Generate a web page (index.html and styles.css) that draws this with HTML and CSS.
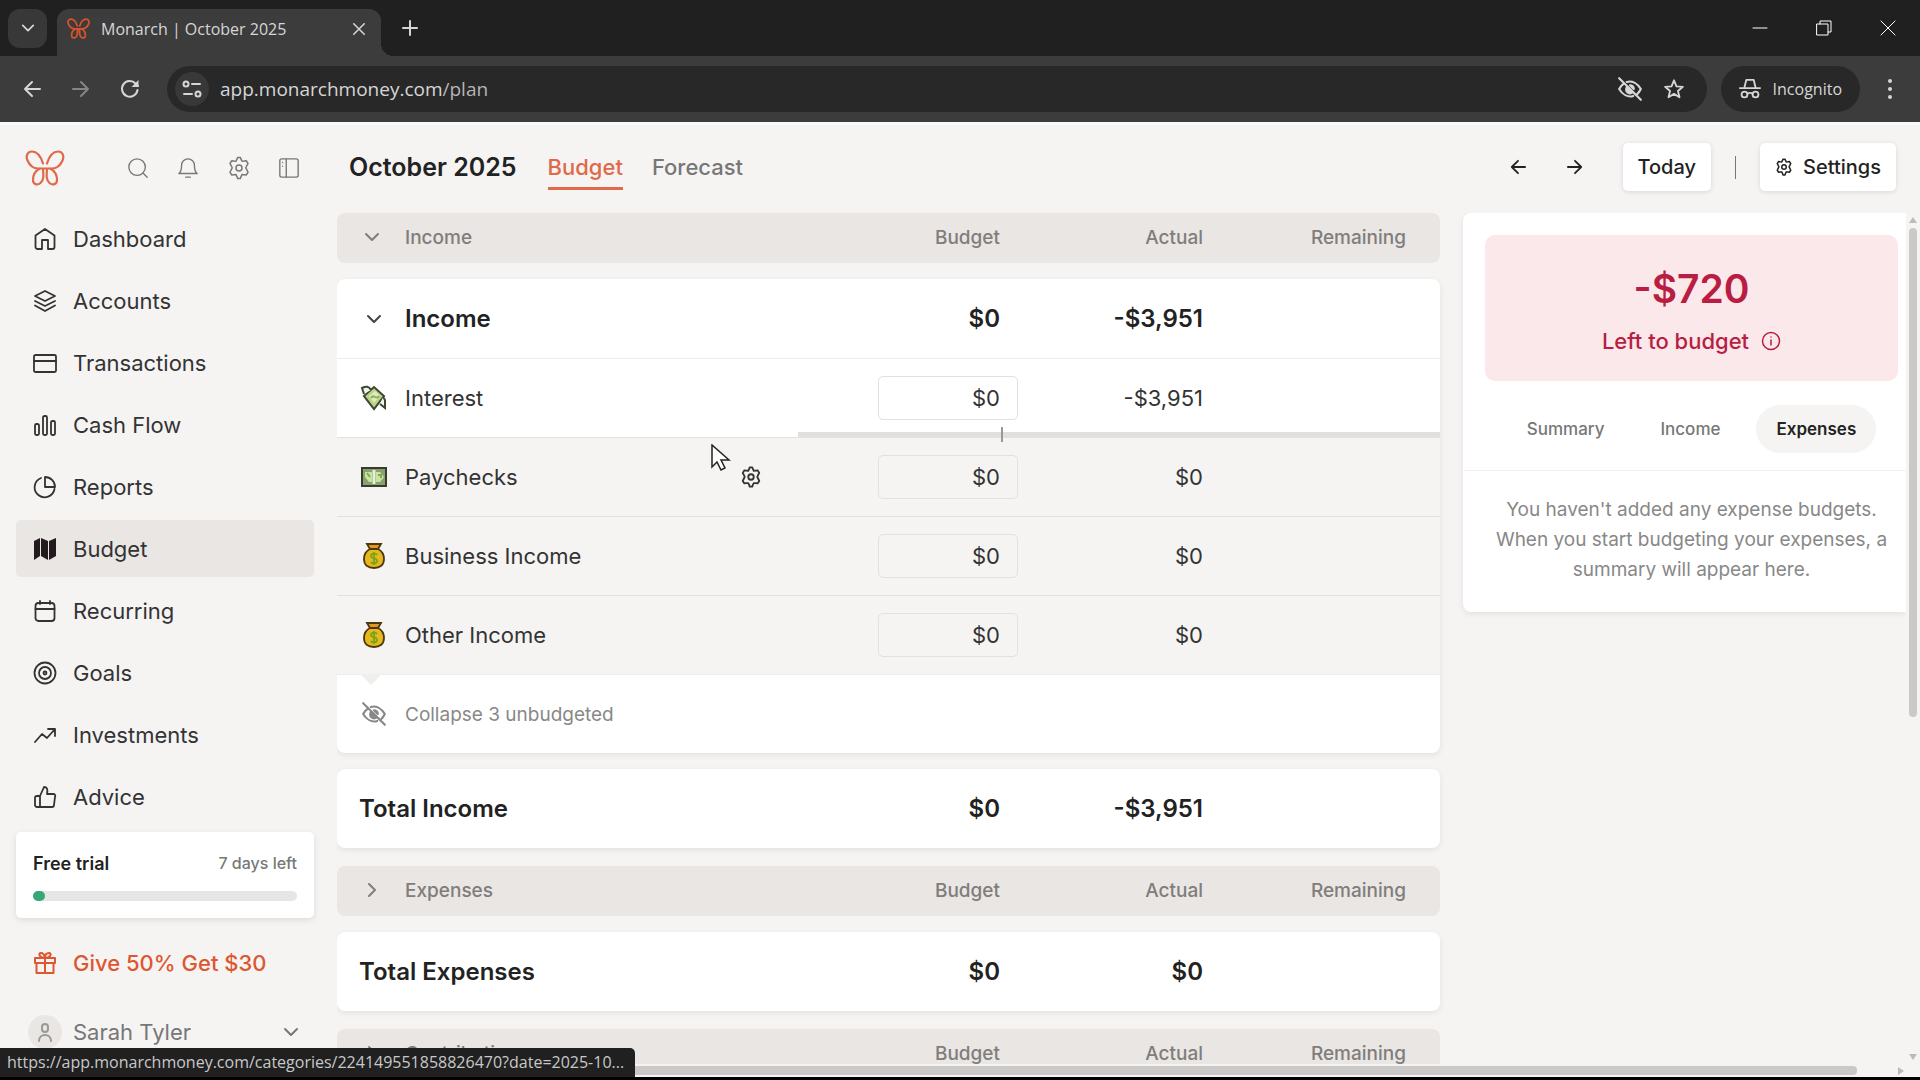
FILE: index.html
```html
<!DOCTYPE html>
<html lang="en">
<head>
    <meta charset="UTF-8" />
    <title>Monarch | October 2025</title>
    <link rel="stylesheet" href="styles.css">
</head>
<body>
    <!-- Icon sprite -->
    <svg class="sprite" xmlns="http://www.w3.org/2000/svg">
        <symbol id="logo" viewBox="0 0 40 36">
            <path d="M18 13.500C16 7 12 1.500 7 1.500C2.500 1.500 .500 6 2.500 10.500C4.500 15 8 18.500 13 18.500H27C32 18.500 35.500 15 37.500 10.500C39.500 6 37.500 1.500 33 1.500C28 1.500 24 7 22 13.500M15 18.500C10 21 8 26 8 30C8 34 12 36 15.500 33C19 30 18.500 25 18 19M25 18.500C30 21 32 26 32 30C32 34 28 36 24.500 33C21 30 21.500 25 22 19" />
        </symbol>
        <symbol id="chevron-down" viewBox="0 0 16 16"><path d="M2 5l6 6 6-6" /></symbol>
        <symbol id="chevron-right" viewBox="0 0 16 16"><path d="M5 2l6 6-6 6" /></symbol>
        <symbol id="arrow-left" viewBox="0 0 18 18"><path d="M17 9H2M9 2L2 9l7 7" /></symbol>
        <symbol id="arrow-right" viewBox="0 0 18 18"><path d="M1 9h15M9 2l7 7-7 7" /></symbol>
        <symbol id="close" viewBox="0 0 16 16"><path d="M1 1l14 14M15 1L1 15" /></symbol>
        <symbol id="plus" viewBox="0 0 16 16"><path d="M8 1v14M1 8h14" /></symbol>
        <symbol id="gear" viewBox="0 0 24 24">
            <path d="M10 3.200L10.600 1.500H13.400L14 3.200L15 5.200L17.300 5L19.200 4.700L21 7.500L20 9.300L18.800 11.800L20 14.200L21 16.300L19.200 19L17.200 18.700L15 18.600L14 20.600L13.400 22.500H10.600L10 20.600L9 18.600L6.800 18.700L4.800 19L3 16.300L4 14.200L5.200 11.800L4 9.300L3 7.500L4.800 4.700L6.700 5L9 5.200Z" />
            <circle cx="12" cy="12" r="3" />
        </symbol>
        <symbol id="eye-off" viewBox="0 0 24 24">
            <path d="M2 2l20 20M9 5.500C14 4 19 7 22 12C21 14 20 15.500 18.500 16.800M15 18.400C10 20 5 17 2 12C3 10 4.300 8.300 6 7.200" />
            <path d="M9.500 10a3.500 3.500 0 0 0 5 5zM12 8.500a3.500 3.500 0 0 1 3.500 3.500z" fill="currentColor" />
        </symbol>
        <symbol id="money-bag" viewBox="0 0 24 28">
            <path d="M8 7C4 9 2 13 2 17C2 23 6 26 12 26S22 23 22 17C22 13 20 9 16 7Z" fill="#e8b71d" stroke="#49390d" stroke-width="1.800" />
            <path d="M5 2H19L16 7H8Z" fill="#e5952a" stroke="#49390d" stroke-width="1.800" />
            <path d="M15 13C14 11 9 11 9 14C9 17 15 15 15 19C15 22 10 22 9 20M12 10V23" fill="none" stroke="#75a51c" stroke-width="1.800" />
        </symbol>
    </svg>

    <!-- Browser chrome -->
    <div class="tabstrip">
        <button class="tab-search" aria-label="Search tabs"><svg class="icon" width="14" height="14"><use href="#chevron-down" /></svg></button>
        <div class="tab">
            <svg class="icon favicon" width="23" height="21"><use href="#logo" /></svg>
            <span class="tab-title">Monarch | October 2025</span>
            <button class="plain" aria-label="Close tab"><svg class="icon" width="12" height="12"><use href="#close" /></svg></button>
        </div>
        <button class="plain new-tab" aria-label="New tab"><svg class="icon" width="16" height="16"><use href="#plus" /></svg></button>
        <div class="window-buttons">
            <button class="plain" aria-label="Minimize"><svg class="icon" width="16" height="16" viewBox="0 0 16 16"><path d="M1 8h14" /></svg></button>
            <button class="plain" aria-label="Restore"><svg class="icon" width="16" height="16" viewBox="0 0 16 16"><path d="M1 4h11v11H1zM4 4V1h11v11h-3" /></svg></button>
            <button class="plain" aria-label="Close window"><svg class="icon" width="16" height="16"><use href="#close" /></svg></button>
        </div>
    </div>
    <div class="toolbar">
        <button class="plain" aria-label="Back"><svg class="icon" width="18" height="18"><use href="#arrow-left" /></svg></button>
        <button class="plain dim" aria-label="Forward"><svg class="icon" width="18" height="18"><use href="#arrow-right" /></svg></button>
        <button class="plain" aria-label="Reload"><svg class="icon" width="20" height="20" viewBox="0 0 20 20"><path d="M17.500 11A7.800 7.800 0 1 1 15.500 4.500L18 7" /><path d="M18.500 1v7h-7z" fill="currentColor" stroke="none" /></svg></button>
        <div class="address">
            <span class="site-info"><svg class="icon" width="20" height="20" viewBox="0 0 20 20"><circle cx="4" cy="5" r="2.500" /><path d="M10 5h8M2 15h8" /><circle cx="16" cy="15" r="2.500" /></svg></span>
            <span class="url">app.monarchmoney.com<span class="url-path">/plan</span></span>
            <button class="plain" aria-label="Tracking protection"><svg class="icon" width="26" height="26"><use href="#eye-off" /></svg></button>
            <button class="plain" aria-label="Bookmark"><svg class="icon" width="22" height="22" viewBox="0 0 24 24"><path d="M12 2.500l2.700 6.600 7 .500-5.400 4.600 1.700 6.900-6-3.800-6 3.800 1.700-6.900L2.300 9.600l7-.500z" /></svg></button>
        </div>
        <div class="incognito">
            <svg class="icon" width="22" height="22" viewBox="0 0 24 24"><path d="M1 11h22M6 10l2-8h8l2 8" /><circle cx="6" cy="18" r="3.200" /><circle cx="18" cy="18" r="3.200" /><path d="M9 17c2-1 4-1 6 0" /></svg>
            Incognito
        </div>
        <button class="plain" aria-label="Menu"><svg width="20" height="22" viewBox="0 0 20 22" fill="currentColor"><circle cx="10" cy="3" r="2" /><circle cx="10" cy="11" r="2" /><circle cx="10" cy="19" r="2" /></svg></button>
    </div>

    <!-- Monarch app -->
    <div class="app">
        <aside class="sidebar">
            <div class="sidebar-top">
                <svg class="icon brand" width="40" height="36"><use href="#logo" /></svg>
                <button class="plain" aria-label="Search"><svg class="icon" width="22" height="22" viewBox="0 0 24 24"><circle cx="11" cy="11" r="9" /><path d="M18 18l4 4" /></svg></button>
                <button class="plain" aria-label="Notifications"><svg class="icon" width="22" height="22" viewBox="0 0 24 24"><path d="M2 18c3-2 3-6 3-9a7 7 0 0 1 14 0c0 3 0 7 3 9zM9.500 22h5" /></svg></button>
                <button class="plain" aria-label="Settings"><svg class="icon" width="24" height="24"><use href="#gear" /></svg></button>
                <button class="plain" aria-label="Toggle sidebar"><svg class="icon" width="22" height="22" viewBox="0 0 24 24"><rect x="2" y="2" width="20" height="20" rx="2" /><path d="M9 2v20M5 6v0M5 10v0" /></svg></button>
            </div>
            <nav class="nav">
                <a href="#"><svg class="icon" width="24" height="24" viewBox="0 0 24 24"><path d="M2.500 8.500L12 2l9.500 6.500V20a2 2 0 0 1-2 2H15v-9H9v9H4.500a2 2 0 0 1-2-2z" /></svg>Dashboard</a>
                <a href="#"><svg class="icon" width="24" height="24" viewBox="0 0 24 24"><path d="M12 2L22 7l-10 5L2 7zM2 12l10 5 10-5M2 16.500L12 22l10-5.500" /></svg>Accounts</a>
                <a href="#"><svg class="icon" width="24" height="24" viewBox="0 0 24 24"><rect x="1" y="4" width="22" height="17" rx="1.500" /><path d="M1 10h22" /></svg>Transactions</a>
                <a href="#"><svg class="icon" width="24" height="24" viewBox="0 0 24 24"><rect x="2" y="11" width="4" height="11" rx="1.500" /><rect x="10" y="3" width="4" height="19" rx="1.500" /><rect x="18" y="8" width="4" height="14" rx="1.500" /></svg>Cash Flow</a>
                <a href="#"><svg class="icon" width="24" height="24" viewBox="0 0 24 24"><path d="M8 3a10 10 0 1 0 13.500 11M12 2v10h10A10 10 0 0 0 12 2z" /></svg>Reports</a>
                <a href="#" class="active"><svg width="24" height="24" viewBox="0 0 24 24" fill="#231a1d"><path d="M1 4l6-3v18l-6 4zM8 1l7 3v19l-7-4zM16 4l7-3v18l-7 4z" /></svg>Budget</a>
                <a href="#"><svg class="icon" width="24" height="24" viewBox="0 0 24 24"><rect x="2.500" y="4" width="19" height="18" rx="3" /><path d="M2.500 10h19M7 2v3M17 2v3" /></svg>Recurring</a>
                <a href="#"><svg class="icon" width="24" height="24" viewBox="0 0 24 24"><circle cx="12" cy="12" r="10.500" /><circle cx="12" cy="12" r="6" /><circle cx="12" cy="12" r="1.500" /></svg>Goals</a>
                <a href="#"><svg class="icon" width="24" height="24" viewBox="0 0 24 24"><path d="M2 19l7-8 5 4 8-9M15 6h7v7" /></svg>Investments</a>
                <a href="#"><svg class="icon" width="24" height="24" viewBox="0 0 24 24"><path d="M7 11l4-9c3 0 4 2 3 7h6a2 2 0 0 1 2 3l-1 8a2 2 0 0 1-2 2H4a2 2 0 0 1-2-2v-7a2 2 0 0 1 2-2h3v11" /></svg>Advice</a>
            </nav>
            <div class="trial">
                <div class="trial-row"><strong>Free trial</strong><span>7 days left</span></div>
                <div class="trial-bar"><div class="trial-fill"></div></div>
            </div>
            <a href="#" class="side-link gift"><svg class="icon" width="24" height="24" viewBox="0 0 24 24"><path d="M2 7h20v5H2zM3.500 12v10h17V12M12 7v15M12 7C6 7 5 2 8 2s4 5 4 5c0-3 1-5 4-5s2 5-4 5" /></svg>Give 50% Get $30</a>
            <button class="side-link user">
                <span class="avatar"><svg class="icon" width="18" height="20" viewBox="0 0 18 20"><rect x="6" y="2" width="6" height="8" rx="3" /><path d="M3 19c0-8 12-8 12 0" /></svg></span>
                Sarah Tyler
                <svg class="icon user-caret" width="16" height="16"><use href="#chevron-down" /></svg>
            </button>
        </aside>

        <main class="main">
            <header class="page-head">
                <h1>October 2025</h1>
                <a href="#" class="page-tab selected">Budget</a>
                <a href="#" class="page-tab">Forecast</a>
                <div class="page-actions">
                    <button class="plain" aria-label="Previous month"><svg class="icon" width="16" height="16"><use href="#arrow-left" /></svg></button>
                    <button class="plain" aria-label="Next month"><svg class="icon" width="16" height="16"><use href="#arrow-right" /></svg></button>
                    <button class="btn today">Today</button>
                    <span class="divider"></span>
                    <button class="btn"><svg class="icon" width="18" height="18"><use href="#gear" /></svg>Settings</button>
                </div>
            </header>

            <div class="scroller">
                <div class="content">
                    <div class="plan">
                        <table>
                            <thead>
                                <tr><th class="name"><svg class="icon" width="16" height="16"><use href="#chevron-down" /></svg>Income</th><th>Budget</th><th>Actual</th><th>Remaining</th></tr>
                            </thead>
                            <tbody>
                                <tr class="group"><td class="name"><svg class="icon" width="16" height="16"><use href="#chevron-down" /></svg>Income</td><td>$0</td><td>-$3,951</td><td></td></tr>
                                <tr class="with-bar">
                                    <td class="name">
                                        <svg width="26" height="26" viewBox="0 0 26 26"><path d="M3 11L13 2l10 9-10 13z" fill="#b9d38a" stroke="#3c4630" stroke-width="2" /><path d="M8 11l6-5 5 5-6 7z" fill="#dcebb9" /><path d="M10 13c3-5 5 3 8-2" fill="none" stroke="#8fae5d" stroke-width="2" /><path d="M3 9L1 3c4-2 7-2 9 2M22 12l2 3v8l-5-4" fill="#f1f4e6" stroke="#3c4630" stroke-width="2" /></svg>
                                        Interest
                                    </td>
                                    <td class="entry"><input type="text" value="$0" aria-label="Interest budget"></td><td>-$3,951</td><td></td>
                                </tr>
                                <tr class="muted">
                                    <td class="name">
                                        <svg width="26" height="20" viewBox="0 0 26 20"><rect x="1" y="1" width="24" height="18" fill="#8b9f75" stroke="#353d2c" stroke-width="2" /><path d="M4 5h7v10H8L4 10zM15 5h4l4 5-4 5h-4z" fill="#c6e69a" /><path d="M13 3v14" stroke="#e8efdc" stroke-width="3" /><path d="M6 6l3 4M17 8h3v3" fill="none" stroke="#82a951" stroke-width="2" /></svg>
                                        Paychecks
                                        <button class="plain row-gear" aria-label="Paychecks settings"><svg class="icon" width="22" height="22"><use href="#gear" /></svg></button>
                                    </td>
                                    <td class="entry"><input type="text" value="$0" aria-label="Paychecks budget"></td><td>$0</td><td></td>
                                </tr>
                                <tr class="muted"><td class="name"><svg width="24" height="28"><use href="#money-bag" /></svg>Business Income</td><td class="entry"><input type="text" value="$0" aria-label="Business Income budget"></td><td>$0</td><td></td></tr>
                                <tr class="muted"><td class="name"><svg width="24" height="28"><use href="#money-bag" /></svg>Other Income</td><td class="entry"><input type="text" value="$0" aria-label="Other Income budget"></td><td>$0</td><td></td></tr>
                                <tr class="collapse"><td class="name" colspan="4"><svg class="icon" width="26" height="26"><use href="#eye-off" /></svg>Collapse 3 unbudgeted</td></tr>
                            </tbody>
                            <tbody>
                                <tr class="group"><td class="total">Total Income</td><td>$0</td><td>-$3,951</td><td></td></tr>
                            </tbody>
                        </table>
                        <table>
                            <thead>
                                <tr><th class="name"><svg class="icon" width="16" height="16"><use href="#chevron-right" /></svg>Expenses</th><th>Budget</th><th>Actual</th><th>Remaining</th></tr>
                            </thead>
                            <tbody>
                                <tr class="group"><td class="total">Total Expenses</td><td>$0</td><td>$0</td><td></td></tr>
                            </tbody>
                        </table>
                        <table>
                            <thead>
                                <tr><th class="name"><svg class="icon" width="16" height="16"><use href="#chevron-right" /></svg>Contributions</th><th>Budget</th><th>Actual</th><th>Remaining</th></tr>
                            </thead>
                        </table>
                    </div>

                    <section class="summary">
                        <div class="left-box">
                            <div class="left-amount">-$720</div>
                            <div class="left-label">Left to budget <svg class="icon" width="20" height="20" viewBox="0 0 20 20"><circle cx="10" cy="10" r="8.500" /><path d="M10 9v5M10 6v0" /></svg></div>
                        </div>
                        <div class="pills">
                            <button>Summary</button>
                            <button>Income</button>
                            <button class="on">Expenses</button>
                        </div>
                        <p>You haven't added any expense budgets. When you start budgeting your expenses, a summary will appear here.</p>
                    </section>
                </div>
                <div class="vbar">
                    <svg width="8" height="6" viewBox="0 0 8 6"><path d="M4 0l4 6H0z" /></svg>
                    <div class="vthumb"></div>
                    <svg width="8" height="6" viewBox="0 0 8 6"><path d="M0 0h8L4 6z" /></svg>
                </div>
            </div>
            <div class="hbar">
                <div class="hthumb"></div>
                <svg width="6" height="8" viewBox="0 0 6 8"><path d="M0 0l6 4-6 4z" /></svg>
            </div>
        </main>
    </div>

    <div class="status">https://app.monarchmoney.com/categories/224149551858826470?date=2025-10...</div>
    <svg class="cursor" width="20" height="28" viewBox="0 0 20 28"><path d="M1 1v22l5-5 4 8 4-2-4-8h8z" fill="#fff" stroke="#222" stroke-width="1.500" /></svg>
</body>
</html>
```

FILE: styles.css
```css
* {
    margin: 0;
    padding: 0;
    box-sizing: border-box;
}

body {
    height: 100vh;
    overflow: hidden;
    display: flex;
    flex-direction: column;
    position: relative;
    background: #f5f4f3;
    border-bottom: 3px solid #000;
    color: #333;
    font-family: Inter, "Liberation Sans", sans-serif;
    font-size: 22px;
}

a {
    color: inherit;
    text-decoration: none;
}

button {
    font: inherit;
    color: inherit;
    border: none;
    background: none;
}

svg {
    flex: none;
}

.sprite {
    display: none;
}

.icon {
    fill: none;
    stroke: currentColor;
    stroke-width: 2;
    stroke-linecap: round;
    stroke-linejoin: round;
}

.plain {
    display: flex;
    justify-content: center;
    align-items: center;
}

/* Browser chrome */
.tabstrip,
.toolbar,
.status {
    font-family: "Open Sans", "Noto Sans", sans-serif;
    color: #d6d6d6;
}

.tabstrip {
    display: flex;
    align-items: center;
    height: 56px;
    flex: none;
    padding-left: 8px;
    background: #202020;
}

.tab-search {
    display: flex;
    justify-content: center;
    align-items: center;
    width: 39px;
    height: 39px;
    border-radius: 12px;
    background: #383838;
}

.tab {
    position: relative;
    align-self: flex-end;
    display: flex;
    align-items: center;
    gap: 11px;
    width: 324px;
    height: 47px;
    margin-left: 10px;
    padding: 0 16px 8px 10px;
    border-radius: 12px 12px 0 0;
    background: #3c3c3c;
}

.tab::after {
    content: "";
    position: absolute;
    left: 100%;
    bottom: 0;
    width: 12px;
    height: 12px;
    background: radial-gradient(circle at 100% 0, transparent 12px, #3c3c3c 12px);
}

.favicon {
    color: #d9542b;
    stroke-width: 3;
}

.tab-title {
    flex: 1;
    font-size: 16px;
}

.new-tab {
    margin-left: 21px;
}

.window-buttons {
    display: flex;
    margin-left: auto;
}

.window-buttons .plain {
    width: 64px;
    height: 56px;
}

.window-buttons .icon {
    stroke-width: 1;
    color: #fff;
}

.toolbar {
    display: flex;
    align-items: center;
    gap: 14px;
    height: 66px;
    flex: none;
    padding: 0 14px;
    background: #3c3c3c;
}

.toolbar > .plain {
    width: 35px;
    height: 40px;
}

.toolbar .dim {
    color: #858585;
}

.address {
    flex: 1;
    display: flex;
    align-items: center;
    gap: 20px;
    height: 46px;
    margin-left: 6px;
    padding: 0 22px 0 8px;
    border-radius: 23px;
    background: #282828;
}

.site-info {
    display: flex;
    justify-content: center;
    align-items: center;
    width: 34px;
    height: 34px;
    border-radius: 17px;
    background: #383838;
}

.url {
    flex: 1;
    margin-left: -9px;
    font-size: 19px;
}

.url-path {
    color: #b5b5b5;
}

.incognito {
    display: flex;
    align-items: center;
    gap: 12px;
    height: 46px;
    padding: 0 18px;
    border-radius: 23px;
    background: #282828;
    font-size: 16px;
}

.toolbar .incognito + .plain {
    width: 32px;
}

.status {
    position: absolute;
    left: 0;
    bottom: 0;
    height: 29px;
    padding: 0 11px 0 7px;
    border-radius: 0 5px 0 0;
    background: #202020;
    font-size: 16px;
    line-height: 29px;
    color: #c8c8c8;
}

.cursor {
    position: absolute;
    left: 711px;
    top: 444px;
}

/* App */
.app {
    flex: 1;
    display: flex;
    min-height: 0;
    border-top: 3px solid #fafafa;
}

.sidebar {
    flex: none;
    width: 337px;
    padding: 0 23px 0 16px;
    overflow: hidden;
}

.sidebar-top {
    display: flex;
    align-items: center;
    height: 85px;
    padding-left: 9px;
    color: #777;
}

.sidebar-top .icon {
    stroke-width: 1.5;
}

.sidebar-top .brand {
    margin-right: 48px;
    color: #e0694a;
    stroke-width: 2.2;
}

.sidebar-top .plain {
    width: 51px;
    height: 40px;
}

.nav {
    display: flex;
    flex-direction: column;
    gap: 5px;
}

.nav a,
.side-link {
    display: flex;
    align-items: center;
    gap: 16px;
    height: 57px;
    padding-left: 17px;
    border-radius: 5px;
}

.nav .icon {
    stroke-width: 1.8;
}

.nav .active {
    background: #e9e6e3;
}

.trial {
    margin-top: 7px;
    padding: 18px 17px 17px;
    border-radius: 5px;
    background: #fff;
    box-shadow: 0 2px 6px rgba(0, 0, 0, 0.1);
}

.trial-row {
    display: flex;
    justify-content: space-between;
    align-items: center;
    height: 26px;
    font-size: 16px;
    font-weight: 500;
    color: #777;
}

.trial-row strong {
    font-size: 18px;
    font-weight: 600;
    color: #222;
}

.trial-bar {
    height: 10px;
    margin-top: 15px;
    border-radius: 5px;
    background: #e6e6e6;
}

.trial-fill {
    width: 12px;
    height: 10px;
    border-radius: 5px;
    background: #36a874;
}

.gift {
    margin-top: 16px;
    color: #dd5730;
    font-weight: 500;
}

.user {
    width: 100%;
    margin-top: 12px;
    padding: 0 15px 0 12px;
    gap: 11px;
    color: #777;
}

.avatar {
    display: flex;
    justify-content: center;
    align-items: center;
    width: 34px;
    height: 34px;
    border-radius: 17px;
    background: #e9e6e4;
    color: #999;
}

.user-caret {
    margin-left: auto;
}

.main {
    flex: 1;
    display: flex;
    flex-direction: column;
    min-width: 0;
}

.page-head {
    flex: none;
    display: flex;
    align-items: center;
    height: 88px;
    padding: 0 24px 4px 12px;
}

.page-head h1 {
    margin-right: 31px;
    font-size: 25px;
    font-weight: 600;
    color: #222;
}

.page-tab {
    height: 46px;
    margin-right: 29px;
    border-bottom: 3px solid transparent;
    line-height: 46px;
    font-weight: 500;
    color: #777;
}

.page-tab.selected {
    border-color: #e0694a;
    color: #e0694a;
}

.page-actions {
    display: flex;
    align-items: center;
    margin-left: auto;
    color: #222;
}

.page-actions .plain {
    width: 57px;
    height: 47px;
}

.btn {
    display: flex;
    align-items: center;
    gap: 10px;
    height: 48px;
    padding: 0 15px;
    border-radius: 5px;
    background: #fff;
    box-shadow: 0 1px 5px rgba(0, 0, 0, 0.12);
    font-size: 20px;
    font-weight: 500;
}

.today {
    margin-left: 19px;
}

.divider {
    width: 1px;
    height: 23px;
    margin: 0 24px;
    background: #777;
}

.scroller {
    flex: 1;
    display: flex;
    min-height: 0;
}

.content {
    flex: 1;
    display: flex;
    align-items: flex-start;
    gap: 23px;
    min-width: 0;
    overflow: hidden;
}

.plan {
    flex: 1;
    display: flex;
    flex-direction: column;
    gap: 18px;
}

/* Tables are laid out as grids so each body can be a card */
table {
    display: flex;
    flex-direction: column;
    gap: 16px;
}

thead,
tbody {
    display: block;
}

thead {
    border-radius: 8px;
    background: #e9e6e4;
}

tbody {
    border-radius: 8px;
    background: #fff;
    box-shadow: 0 2px 6px rgba(0, 0, 0, 0.08);
}

tr {
    position: relative;
    display: grid;
    grid-template-columns: 1fr 140px 203px 203px;
    align-items: center;
    height: 79px;
    padding: 0 16px 0 22px;
}

tr + tr {
    border-top: 1px solid #eeedec;
}

thead tr {
    height: 50px;
    padding-bottom: 2px;
}

th,
td {
    padding-right: 18px;
    text-align: right;
}

th {
    font-size: 19px;
    font-weight: 500;
    color: #807d7b;
}

th:first-child,
td:first-child {
    text-align: left;
}

.name {
    display: flex;
    align-items: center;
    gap: 16px;
}

.name > svg {
    width: 30px;
}

th.name {
    gap: 20px;
}

th.name > svg {
    width: 26px;
}

.row-gear {
    margin-left: auto;
    margin-right: 98px;
}

.group {
    font-size: 24px;
    font-weight: 600;
    color: #222;
}

.group .icon {
    color: #444;
}

tr.muted {
    background: #f5f4f3;
    border-color: #e3e1e0;
}

td.entry {
    padding: 0;
}

td input {
    display: block;
    width: 140px;
    height: 44px;
    padding: 0 17px;
    border: 1px solid #e2e1e0;
    border-radius: 5px;
    background: transparent;
    font: inherit;
    color: inherit;
    text-align: right;
}

/* Spent bar along the bottom of a row */
.with-bar::before {
    content: "";
    position: absolute;
    right: 0;
    bottom: -1px;
    width: 642px;
    height: 6px;
    background: #e0dfde;
}

.with-bar::after {
    content: "";
    position: absolute;
    right: 437px;
    bottom: -5px;
    z-index: 1;
    width: 2px;
    height: 15px;
    background: #999;
}

.collapse {
    font-size: 19px;
    color: #888;
}

.collapse::before {
    content: "";
    position: absolute;
    left: 23px;
    top: -1px;
    border: 11px solid transparent;
    border-top-color: #f0efee;
    border-bottom: none;
}

/* Right hand summary */
.summary {
    flex: none;
    width: 443px;
    padding: 22px 8px 27px 22px;
    border-radius: 8px 0 0 8px;
    background: #fff;
    box-shadow: 0 2px 6px rgba(0, 0, 0, 0.08);
}

.left-box {
    padding: 28px 0 24px;
    border-radius: 10px;
    background: #fbe8ea;
    color: #b91e42;
    text-align: center;
    font-weight: 500;
}

.left-amount {
    font-size: 39px;
    line-height: 52px;
    font-weight: 600;
}

.left-label {
    display: flex;
    justify-content: center;
    align-items: center;
    gap: 12px;
    height: 42px;
    padding-top: 10px;
}

.left-label .icon {
    stroke-width: 1.5;
}

.pills {
    display: flex;
    justify-content: center;
    gap: 16px;
    margin: 24px -8px 0 -22px;
    padding: 0 0 17px 14px;
    border-bottom: 1px solid #f3f2f1;
}

.pills button {
    height: 48px;
    padding: 0 20px;
    border-radius: 24px;
    font-size: 17px;
    font-weight: 500;
    color: #777;
}

.pills .on {
    background: #f5f4f3;
    color: #222;
    font-weight: 600;
}

.summary p {
    padding: 24px 4px 0;
    font-size: 19px;
    line-height: 30px;
    text-align: center;
    color: #888;
}

/* Scrollbars */
.vbar {
    flex: none;
    display: flex;
    flex-direction: column;
    align-items: center;
    width: 14px;
    padding: 4px 0;
}

.vbar svg,
.hbar svg {
    fill: #bbb;
}

.vthumb {
    width: 8px;
    height: 58%;
    margin: 5px 0 auto;
    border-radius: 4px;
    background: #cbc9c8;
}

.hbar {
    flex: none;
    display: flex;
    justify-content: space-between;
    align-items: center;
    height: 13px;
    padding-right: 16px;
}

.hthumb {
    width: 97%;
    height: 9px;
    border-radius: 4px;
    background: #cbc9c8;
}
```
